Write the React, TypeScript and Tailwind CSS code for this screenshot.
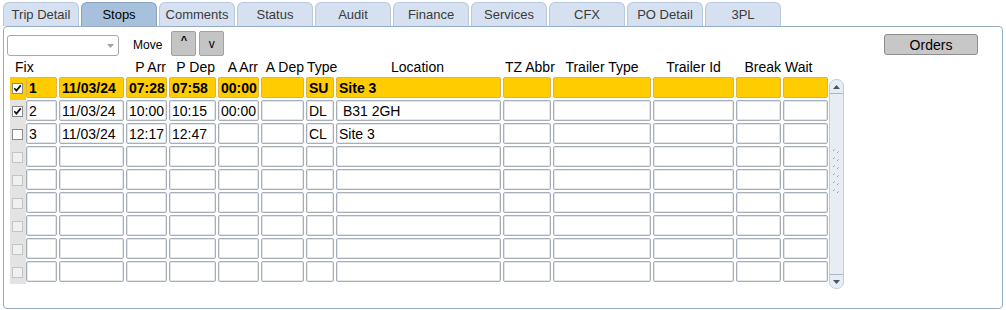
import React from "react";

const tabs = ["Trip Detail", "Stops", "Comments", "Status", "Audit", "Finance", "Services", "CFX", "PO Detail", "3PL"];

const widths = ["w-[31px]", "w-[65px]", "w-[41px]", "w-[47px]", "w-[41px]", "w-[43px]", "w-[28px]", "w-[165px]", "w-[48px]", "w-[98px]", "w-[81px]", "w-[45px]", "w-[45px]"];

type Row = { cells: string[]; checked: boolean; active?: boolean; real: boolean };

const rows: Row[] = [
  { cells: ["1", "11/03/24", "07:28", "07:58", "00:00", "", "SU", "Site 3", "", "", "", "", ""], checked: true, active: true, real: true },
  { cells: ["2", "11/03/24", "10:00", "10:15", "00:00", "", "DL", " B31 2GH", "", "", "", "", ""], checked: true, real: true },
  { cells: ["3", "11/03/24", "12:17", "12:47", "", "", "CL", "Site 3", "", "", "", "", ""], checked: false, real: true },
  ...Array.from({ length: 6 }, () => ({ cells: Array(13).fill(""), checked: false, real: false })),
];

const headers: { t: string; cls: string }[] = [
  { t: "", cls: "" },
  { t: "", cls: "" },
  { t: "P Arr", cls: "justify-end pr-[1px]" },
  { t: "P Dep", cls: "justify-end pr-[1px]" },
  { t: "A Arr", cls: "justify-end pr-[1px]" },
  { t: "A Dep", cls: "justify-end" },
  { t: "Type", cls: "justify-start pl-[1px]" },
  { t: "Location", cls: "justify-center pr-[2px]" },
  { t: "TZ Abbr", cls: "justify-start pl-[2px]" },
  { t: "Trailer Type", cls: "justify-center" },
  { t: "Trailer Id", cls: "justify-center" },
  { t: "Break", cls: "justify-end" },
  { t: "Wait", cls: "justify-start pl-[2px]" },
];

function Check({ checked, real }: { checked: boolean; real: boolean }) {
  return (
    <div
      className={
        "w-[11px] h-[11px] border " +
        (real ? "border-[#8a8a8a] bg-white" : "border-[#c4c4c4] bg-[#f0f0f0]")
      }
    >
      {checked && (
        <svg width="9" height="9" viewBox="0 0 9 9" className="block">
          <path d="M1.3 4.3 L3.4 6.6 L7.8 1.4" stroke="#111" strokeWidth="1.7" fill="none" />
        </svg>
      )}
    </div>
  );
}

function Grip() {
  const dots = [0, 1, 2, 3, 4, 5];
  return (
    <svg width="9" height="50" viewBox="0 0 9 50">
      {dots.map((i) => (
        <g key={i}>
          <path d={`M1 ${i * 8 + 4} l1.5 -1.5`} stroke="#8f9aa8" strokeWidth="1" />
          <path d={`M5 ${i * 8 + 6} l1.5 -1.5`} stroke="#8f9aa8" strokeWidth="1" />
        </g>
      ))}
    </svg>
  );
}

export default function App() {
  return (
    <div className="w-[1006px] h-[310px] bg-white overflow-hidden font-['Liberation_Sans',Arial,sans-serif] text-black">
      {/* Tabs */}
      <div className="flex items-end h-[26px] pl-[3px] gap-[2px]">
        {tabs.map((t) => {
          const active = t === "Stops";
          return (
            <div
              key={t}
              className={
                "w-[76px] h-[24px] rounded-t-[6px] border border-b-0 flex items-center justify-center text-[13px] leading-none " +
                (active
                  ? "bg-[#a7c1dc] border-[#86a3c3] text-black"
                  : "bg-[#d5e1f0] border-[#b8c9de] text-[#3a3a3a]")
              }
            >
              {t}
            </div>
          );
        })}
      </div>

      {/* Panel */}
      <div className="ml-[3px] w-[1000px] h-[283px] border border-[#97abc5] rounded-[4px] flex flex-col">
        {/* Controls */}
        <div className="h-[31px] flex items-start">
          <div className="ml-[3px] mt-[8px] w-[112px] h-[21px] border border-[#a9a9a9] rounded-[3px] bg-white flex items-center justify-end pr-[4px]">
            <svg width="7" height="4" viewBox="0 0 7 4">
              <path d="M0 0 H7 L3.5 4 Z" fill="#a3a3a3" />
            </svg>
          </div>
          <div className="ml-[14px] mt-[11px] text-[12px] leading-[14px]">Move</div>
          <div className="ml-[9px] mt-[4px] w-[25px] h-[25px] bg-[#c4c4c4] border border-[#a2a2a2] rounded-[2px] flex items-start justify-center pt-[3px] text-[11px] font-bold leading-none">
            ^
          </div>
          <div className="ml-[3px] mt-[4px] w-[25px] h-[25px] bg-[#c4c4c4] border border-[#a2a2a2] rounded-[2px] flex items-center justify-center text-[12px] leading-none">
            v
          </div>
          <div className="ml-auto mr-[24px] mt-[7px] w-[94px] h-[21px] bg-[#c7c7c7] border border-[#8e8e8e] rounded-[3px] flex items-center justify-center text-[14px] leading-none">
            Orders
          </div>
        </div>

        {/* Header */}
        <div className="h-[17px] flex items-center ml-[6px] text-[14px] leading-none whitespace-nowrap">
          <div className="w-[16px] pl-[5px] overflow-visible">Fix</div>
          <div className="flex gap-[2px]">
            {headers.map((h, i) => (
              <div key={i} className={widths[i] + " flex overflow-visible " + h.cls}>
                <span>{h.t}</span>
              </div>
            ))}
          </div>
        </div>

        {/* Grid + scrollbar */}
        <div className="mt-[2px] ml-[6px] flex items-start">
          <div className="flex flex-col">
            {rows.map((r, ri) => (
              <div key={ri} className="h-[23px] flex items-start">
                <div
                  className={
                    "w-[16px] h-[23px] pl-[2px] pt-[6px] " + (r.active ? "bg-[#ffcc00]" : "bg-[#e3e3e3]")
                  }
                >
                  <Check checked={r.checked} real={r.real} />
                </div>
                <div className="flex gap-[2px]">
                  {r.cells.map((c, ci) => (
                    <div
                      key={ci}
                      className={
                        widths[ci] +
                        " h-[21px] rounded-[2px] border flex items-center px-[2px] text-[14px] leading-none whitespace-pre overflow-hidden " +
                        (r.active
                          ? "bg-[#ffcc00] border-[#d9b446] font-bold"
                          : "bg-white border-[#a6aeb8] shadow-[inset_0_0_0_1px_#e3e7ec]")
                      }
                    >
                      {c}
                    </div>
                  ))}
                </div>
              </div>
            ))}
          </div>
          <div className="ml-[1px] mt-[2px] w-[15px] h-[210px] rounded-[7px] border border-[#c4cdd9] bg-[#e8edf4] flex flex-col items-center">
            <div className="w-full h-[14px] border-b border-[#aab5c4] flex items-center justify-center">
              <svg width="7" height="4" viewBox="0 0 7 4">
                <path d="M0 4 H7 L3.5 0 Z" fill="#4b5561" />
              </svg>
            </div>
            <div className="flex-1 flex items-center justify-center pb-[24px]">
              <Grip />
            </div>
            <div className="w-full h-[14px] border-t border-[#aab5c4] flex items-center justify-center">
              <svg width="7" height="4" viewBox="0 0 7 4">
                <path d="M0 0 H7 L3.5 4 Z" fill="#4b5561" />
              </svg>
            </div>
          </div>
        </div>
      </div>
    </div>
  );
}
